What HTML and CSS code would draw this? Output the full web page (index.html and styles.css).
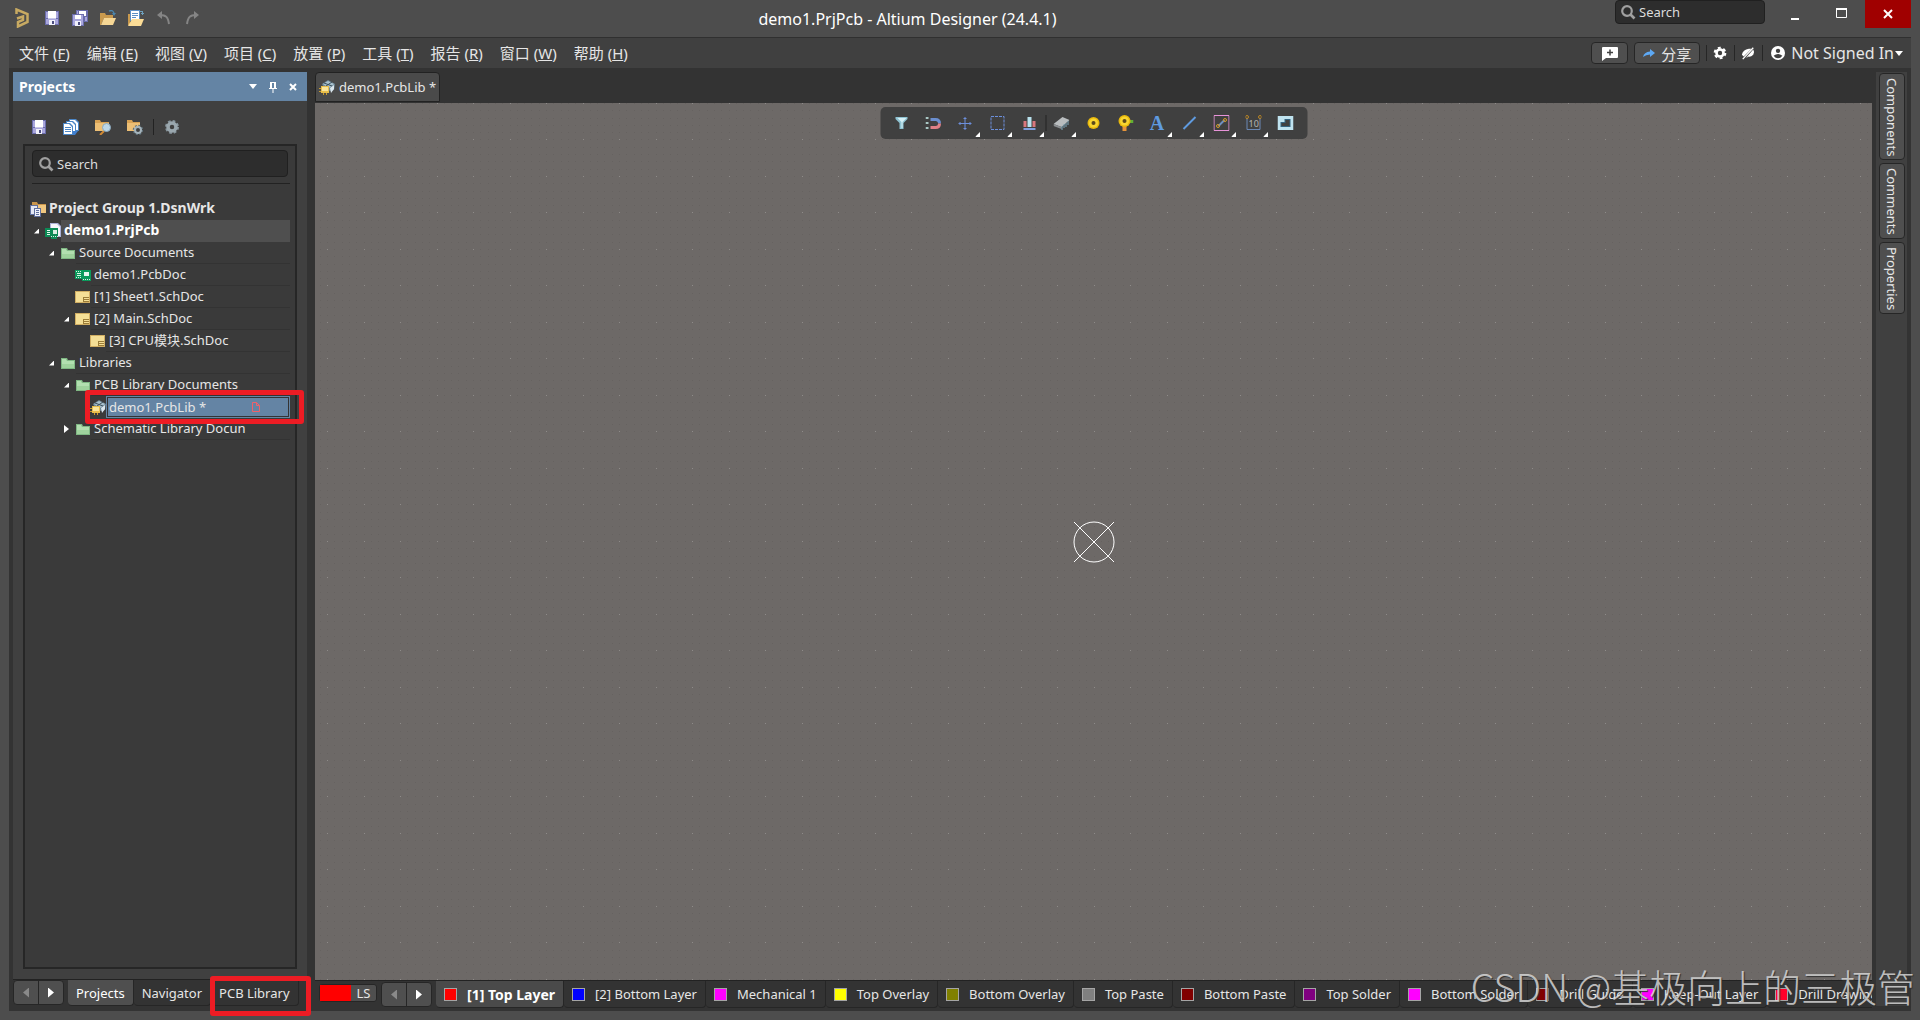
FILE: index.html
```
<!DOCTYPE html>
<html lang="zh-CN">
<head>
  <meta charset="UTF-8">
  <title>demo1.PrjPcb - Altium Designer (24.4.1)</title>
  <link rel="stylesheet" href="styles.css">
</head>
<body>

  <svg class="defs" aria-hidden="true">
    <symbol id="save" viewBox="0 0 16 16">
      <path fill="#6a6cab" d="M1 1h14v14H1z"/>
      <path fill="#a9a6dc" d="M2 2h2v6H2zM12 2h2v6h-2zM2 9h12v5H2z"/>
      <path fill="#fff" d="M4 1h8v7H4z"/>
      <path fill="#c9c8e8" d="M4 8h8v1H4z"/>
      <path fill="#f0f0fa" d="M5 10h6v5H5z"/>
      <path fill="#4b4d80" d="M8 11h2v3H8z"/>
    </symbol>
    <symbol id="save-all" viewBox="0 0 16 16">
      <path fill="#6a6cab" d="M4 0h12v12H4z"/>
      <path fill="#fff" d="M7 1h7v5H7z"/>
      <path fill="#a9a6dc" d="M5 1h1v10H5zM13 7h2v4h-2z"/>
      <path fill="#6a6cab" d="M0 4h12v12H0z"/>
      <path fill="#a9a6dc" d="M1 5h10v10H1z"/>
      <path fill="#fff" d="M3 5h6v4H3z"/>
      <path fill="#f0f0fa" d="M3 11h6v5H3z"/>
      <path fill="#4b4d80" d="M6 12h2v3H6z"/>
    </symbol>
    <symbol id="open" viewBox="0 0 16 16">
      <path fill="#c99a4e" d="M0 3h5l1 2h7v3H4L1 15H0z"/>
      <path fill="#f6d795" d="M4 8h12l-3 7H1z"/>
      <path fill="none" stroke="#4a86ad" stroke-width="1.4" d="M9 1c3-1 5 0 5 3"/>
      <path fill="#4a86ad" d="M12 3h4l-2 3z"/>
    </symbol>
    <symbol id="open-doc" viewBox="0 0 16 16">
      <path fill="#c99a4e" d="M0 4h2v11H0z"/>
      <path fill="#5c8fc4" d="M2 0h10v11H2z"/>
      <path fill="#fff" d="M3 1h8v9H3z"/>
      <path stroke="#5c8fc4" d="M4 3.500h6M4 5.500h6M4 7.500h4"/>
      <path fill="#fbdc96" d="M4 9h12l-3 7H0z"/>
      <path stroke="#6da0bd" d="M12 1.500h3M14.500 1v4M13 3.500h3"/>
    </symbol>
    <symbol id="undo" viewBox="0 0 16 16">
      <path fill="none" stroke="#858585" stroke-width="2" d="M4 5c6 0 8 2 9 9"/>
      <path fill="#858585" d="M1 5l5-4v8z"/>
    </symbol>
    <symbol id="redo" viewBox="0 0 16 16">
      <path fill="none" stroke="#858585" stroke-width="2" d="M12 5C6 5 4 7 3 14"/>
      <path fill="#858585" d="M15 5l-5-4v8z"/>
    </symbol>
    <symbol id="docs" viewBox="0 0 16 16">
      <path fill="#4c86c6" d="M6 0h7l3 3v9H6z"/>
      <path fill="#fff" d="M7 1h5l3 3v7H7z"/>
      <path fill="#4c86c6" d="M3 2h7l3 3v9H3z"/>
      <path fill="#fff" d="M4 3h5l3 3v7H4z"/>
      <path fill="#4c86c6" d="M0 4h7l3 3v9H0z"/>
      <path fill="#fff" d="M1 5h5l3 3v7H1z"/>
      <path stroke="#4c86c6" d="M2 8.500h6M2 10.500h6M2 12.500h6"/>
      <path fill="#3f7fd0" d="M10 12h5l-3 4h-2z"/>
    </symbol>
    <symbol id="folder-search" viewBox="0 0 16 16">
      <path fill="#d8a254" d="M0 1h5l1 2h8v9H0z"/>
      <path fill="#edbf75" d="M0 4h14v8H0z"/>
      <path stroke="#d08a35" stroke-width="2" d="M9 12l-4 4"/>
      <circle cx="11.500" cy="8.500" r="4" fill="#bcd6e6" stroke="#8aa9be"/>
    </symbol>
    <symbol id="folder-gear" viewBox="0 0 16 16">
      <path fill="#d8a254" d="M0 1h5l1 2h7v9H0z"/>
      <path fill="#edbf75" d="M0 4h13v8H0z"/>
      <circle cx="11" cy="11" r="4.500" fill="none" stroke="#5f7079" stroke-width="1.500" stroke-dasharray="2 1.500"/>
      <circle cx="11" cy="11" r="3" fill="#404040" stroke="#a5b4bc" stroke-width="2"/>
    </symbol>
    <symbol id="gear" viewBox="0 0 16 16">
      <circle cx="8" cy="8" r="6" fill="none" stroke="#87959d" stroke-width="2" stroke-dasharray="2.700 2"/>
      <circle cx="8" cy="8" r="4" fill="none" stroke="#9aa7ae" stroke-width="3.500"/>
    </symbol>
    <symbol id="gear-white" viewBox="0 0 16 16">
      <circle cx="8" cy="8" r="6" fill="none" stroke="#fff" stroke-width="2.500" stroke-dasharray="3.280 3"/>
      <circle cx="8" cy="8" r="4" fill="none" stroke="#fff" stroke-width="3"/>
    </symbol>
    <symbol id="search" viewBox="0 0 16 16">
      <circle cx="7" cy="7" r="4.800" fill="none" stroke="#a0a0a0" stroke-width="2.200"/>
      <path stroke="#a0a0a0" stroke-width="2.600" d="M10.500 10.500l4 4"/>
    </symbol>
    <symbol id="group" viewBox="0 0 16 16">
      <path fill="#c9954c" d="M2 1h5l1 2h8v9H2z"/>
      <path fill="#f0c780" d="M3 4h13v8H3z"/>
      <path fill="#5f6f9e" d="M0 4h8v10H0z"/>
      <path fill="#e4e8f4" d="M1 5h6v8H1z"/>
      <path fill="#5f6f9e" d="M4 7h7v9H4z"/>
      <path fill="#eef1fa" d="M5 8h5v7H5z"/>
      <path stroke="#5f6f9e" d="M6 9.500h3M6 11.500h3M6 13.500h3"/>
    </symbol>
    <symbol id="project" viewBox="0 0 16 16">
      <path fill="#aab0d6" d="M5 0h8l3 3v11H5z"/>
      <path fill="#f5f5fb" d="M6 1h6l3 3v9H6z"/>
      <path fill="#0c8a55" d="M0 5h13v9H0z"/>
      <path fill="#0c8a55" d="M6 13h6v3H6z"/>
      <path stroke="#e8f6ef" d="M2 7.500h3M2 9.500h3M2 11.500h3"/>
      <path fill="#d8efe3" d="M8 7h4v4H8z"/>
      <path stroke="#d8efe3" stroke-dasharray="1 1" d="M6 13.500h7"/>
    </symbol>
    <symbol id="folder" viewBox="0 0 16 16">
      <path fill="#7fb783" d="M1 3h6l1 2h7v9H1z"/>
      <path fill="#b2dfb0" d="M2 4h4l1 2h7v7H2z"/>
      <path fill="#9fd29d" d="M2 9h12v4H2z"/>
    </symbol>
    <symbol id="pcb" viewBox="0 0 16 16">
      <path fill="#0c9a5c" d="M0 3h16v9H0zM7 12h9v2H7z"/>
      <path stroke="#d9f3e5" stroke-dasharray="1 1" d="M1 4.500h5M1 10.500h5M8 12.500h8"/>
      <path stroke="#d9f3e5" d="M2 6.500h4M2 8.500h4"/>
      <path fill="#e8f6ef" d="M9 5h5v4H9z"/>
    </symbol>
    <symbol id="sheet" viewBox="0 0 16 16">
      <path fill="#d1ae63" d="M0 2h15v12H0z"/>
      <path fill="#f5df96" d="M1 3h13v10H1z"/>
      <path stroke="#9c7d38" d="M8 8.500h6M9 10.500h5M8.500 9v4M9 12.500h5"/>
    </symbol>
    <symbol id="pcblib" viewBox="0 0 16 16">
      <path fill="#6e8796" d="M3 5l6-4 7 4-1 6-4 1-6-3z"/>
      <path fill="#a9c1cd" d="M4 5l5-3 6 3-5 4z"/>
      <path stroke="#3b4f5c" d="M5 4l8 3M7 7l6-4"/>
      <path fill="#dbe7ee" d="M11 9l4-3v4l-3 4z"/>
      <path fill="#e8be4b" d="M2 7h8v7H2z"/>
      <path fill="#fbe69b" d="M3 8h6v4H3z"/>
      <path stroke="#c99c2c" d="M0 9.500h2M0 12.500h2M4.500 14v2M7.500 14v2"/>
    </symbol>
    <symbol id="pin" viewBox="0 0 12 12">
      <path fill="#fff" d="M3 1h6v6h1v1H6.500v4h-1V8H2V7h1z"/>
      <path fill="#6484a4" d="M5 2h2v5H5z"/>
    </symbol>
    <symbol id="cross" viewBox="0 0 12 12">
      <path stroke="#fff" stroke-width="2" d="M3 3l6 6M9 3l-6 6"/>
    </symbol>
  </svg>

  <div class="app">

    <header class="title-bar">
      <svg class="logo" viewBox="0 0 14 20" aria-hidden="true">
        <path fill="none" stroke="#c8aa62" stroke-width="2.500" d="M1.500 6V1.500L12.500 6v8L3 18.500V14l5-2V8.500L2 10.500"/>
      </svg>
      <div class="quick">
        <button aria-label="Save"><svg><use href="#save"/></svg></button>
        <button aria-label="Save all"><svg><use href="#save-all"/></svg></button>
        <button aria-label="Open"><svg><use href="#open"/></svg></button>
        <button aria-label="Open document"><svg><use href="#open-doc"/></svg></button>
        <button aria-label="Undo"><svg><use href="#undo"/></svg></button>
        <button aria-label="Redo"><svg><use href="#redo"/></svg></button>
      </div>
      <h1>demo1.PrjPcb - Altium Designer (24.4.1)</h1>
      <label class="search top-search">
        <svg><use href="#search"/></svg>
        <input type="text" placeholder="Search" aria-label="Search">
      </label>
      <div class="window-buttons">
        <button aria-label="Minimize"><svg viewBox="0 0 16 16"><path fill="#fff" d="M3 12h8v2H3z"/></svg></button>
        <button aria-label="Maximize"><svg viewBox="0 0 16 16"><path fill="none" stroke="#fff" d="M2.500 2.500h10v9h-10z"/><path fill="#fff" d="M2 2h11v2H2z"/></svg></button>
        <button class="close" aria-label="Close"><svg viewBox="0 0 16 16"><path stroke="#fff" stroke-width="2" d="M4 4l8 8M12 4l-8 8"/></svg></button>
      </div>
    </header>

    <nav class="menu-bar">
      <a href="#">文件 (<u>F</u>)</a>
      <a href="#">编辑 (<u>E</u>)</a>
      <a href="#">视图 (<u>V</u>)</a>
      <a href="#">项目 (<u>C</u>)</a>
      <a href="#">放置 (<u>P</u>)</a>
      <a href="#">工具 (<u>T</u>)</a>
      <a href="#">报告 (<u>R</u>)</a>
      <a href="#">窗口 (<u>W</u>)</a>
      <a href="#">帮助 (<u>H</u>)</a>
      <div class="account">
        <button class="boxed" aria-label="Add comment"><svg viewBox="0 0 16 16"><path fill="#fff" d="M1 2h14q1 0 1 1v9q0 1-1 1H4l-4 3V3q0-1 1-1z"/><path stroke="#404040" stroke-width="1.500" d="M8 4.500v6M5 7.500h6"/></svg></button>
        <button class="boxed share"><svg viewBox="0 0 12 12"><path fill="#5da9f5" d="M7 2l5 4-5 4V7.500Q3 7.500 0 10q1-5 7-5.500z"/></svg>分享</button>
        <button class="plain" aria-label="Settings"><svg><use href="#gear-white"/></svg></button>
        <button class="plain" aria-label="Notifications off"><svg viewBox="0 0 16 16"><path fill="#fff" d="M1 10q1-6 8-7l3 0-9 9zM6 13l8-9q2 3 0 6-3 3-6 2l-1 1z"/><path stroke="#fff" stroke-width="1.500" d="M2 15L14 2"/></svg></button>
        <button class="plain user"><svg viewBox="0 0 16 16"><circle cx="8" cy="8" r="8" fill="#fff"/><circle cx="8" cy="5.500" r="2.500" fill="#404040"/><path fill="#404040" d="M3 11q5-4 10 0-2 3-5 3t-5-3z"/></svg>Not Signed In<i class="caret"></i></button>
      </div>
    </nav>

    <main class="workspace">

      <aside class="side">
        <section class="panel">
          <header class="panel-header">
            <h2>Projects</h2>
            <button aria-label="Panel menu"><i class="caret"></i></button>
            <button aria-label="Pin"><svg><use href="#pin"/></svg></button>
            <button aria-label="Close panel"><svg><use href="#cross"/></svg></button>
          </header>
          <div class="panel-tools">
            <button aria-label="Save"><svg><use href="#save"/></svg></button>
            <button aria-label="Documents"><svg><use href="#docs"/></svg></button>
            <button aria-label="Explore"><svg><use href="#folder-search"/></svg></button>
            <button aria-label="Project options"><svg><use href="#folder-gear"/></svg></button>
            <button class="split" aria-label="Settings"><svg><use href="#gear"/></svg></button>
          </div>
          <div class="tree-box">
            <label class="search">
              <svg><use href="#search"/></svg>
              <input type="text" placeholder="Search" aria-label="Search projects">
            </label>
            <ul class="tree">
              <li class="l0 bold"><svg><use href="#group"/></svg><span>Project Group 1.DsnWrk</span></li>
              <li class="l1 bold open current"><svg><use href="#project"/></svg><span>demo1.PrjPcb</span></li>
              <li class="l2 open"><svg><use href="#folder"/></svg><span>Source Documents</span></li>
              <li class="l3"><svg><use href="#pcb"/></svg><span>demo1.PcbDoc</span></li>
              <li class="l3"><svg><use href="#sheet"/></svg><span>[1] Sheet1.SchDoc</span></li>
              <li class="l3 open"><svg><use href="#sheet"/></svg><span>[2] Main.SchDoc</span></li>
              <li class="l4"><svg><use href="#sheet"/></svg><span>[3] CPU模块.SchDoc</span></li>
              <li class="l2 open"><svg><use href="#folder"/></svg><span>Libraries</span></li>
              <li class="l3 open"><svg><use href="#folder"/></svg><span>PCB Library Documents</span></li>
              <li class="l4 selected"><svg><use href="#pcblib"/></svg><span>demo1.PcbLib *<svg class="modified" viewBox="0 0 10 12"><path fill="none" stroke="#f0616a" d="M1.500 1.500h4l3 3v6h-7zM5.500 1.500v3h3"/></svg></span><i class="mark"></i></li>
              <li class="l3 closed"><svg><use href="#folder"/></svg><span>Schematic Library Docun</span></li>
            </ul>
          </div>
        </section>
        <div class="panel-tabs">
          <div class="arrows">
            <button disabled aria-label="Previous"></button>
            <button aria-label="Next"></button>
          </div>
          <button class="tab active">Projects</button>
          <button class="tab">Navigator</button>
          <button class="tab">PCB Library<i class="mark"></i></button>
        </div>
      </aside>

      <section class="editor">
        <div class="doc-tabs">
          <button class="doc-tab"><svg><use href="#pcblib"/></svg>demo1.PcbLib *</button>
        </div>

        <div class="canvas">
          <svg class="grid" aria-hidden="true">
            <defs>
              <path id="minor" stroke="#666260" d="M0 .500h1M7 .500h1M15 .500h1M22 .500h1M29 .500h1M37 .500h1M44 .500h1M51 .500h1M58 .500h1M66 .500h1"/>
              <path id="major" stroke="#8e8b89" d="M0 .500h1M37 .500h1"/>
              <pattern id="dots" x="12" y="0" width="73" height="73" patternUnits="userSpaceOnUse">
                <use href="#minor"/>
                <use href="#minor" y="7"/>
                <use href="#minor" y="15"/>
                <use href="#minor" y="22"/>
                <use href="#minor" y="29"/>
                <use href="#minor" y="36"/>
                <use href="#minor" y="44"/>
                <use href="#minor" y="51"/>
                <use href="#minor" y="58"/>
                <use href="#minor" y="66"/>
                <use href="#major"/>
                <use href="#major" y="36"/>
              </pattern>
            </defs>
            <rect width="100%" height="100%" fill="url(#dots)"/>
          </svg>

          <div class="tools">
            <button aria-label="Filter"><svg viewBox="0 0 16 16"><path fill="#8fc3d2" d="M2 2h12v2l-4 4v6H6V8L2 4z"/><path fill="#d6f0f6" d="M4 3h9L9 7v6H8V7z"/></svg></button>
            <button aria-label="Snap"><svg viewBox="0 0 16 16"><path fill="none" stroke="#6b8fd0" stroke-width="3" d="M5 4.500h5q4 0 4 4"/><path fill="none" stroke="#df8087" stroke-width="3" d="M14 8.500q0 4-4 4H5"/><path fill="#a9c7c4" d="M0 2h3v2H0zM0 7h3v2H0zM0 12h3v2H0z"/></svg></button>
            <button class="more" aria-label="Move"><svg viewBox="0 0 16 16"><path stroke="#6c8fdc" d="M7.500 2v13M1 8.500h13"/><path fill="#6c8fdc" d="M6 3h3v1H6zM6 13h3v1H6zM2 7h1v3H2zM12 7h1v3h-1z"/></svg></button>
            <button class="more" aria-label="Select area"><svg viewBox="0 0 16 16"><path fill="none" stroke="#6c8fdc" stroke-dasharray="3 1" d="M1.500 1.500h13v13h-13z"/></svg></button>
            <button class="more" aria-label="Align"><svg viewBox="0 0 16 16"><path fill="#d9777d" d="M2 6h3v6H2zM11 6h3v6h-3z"/><path fill="#b9e2ee" d="M6 2h4v10H6z"/><path fill="#7f9fe0" d="M2 13h12v2H2z"/></svg></button>
            <button class="more split" aria-label="Component"><svg viewBox="0 0 16 16"><path fill="#b9bdbf" d="M0 9l9-7 7 3-8 7z"/><path fill="#8b8f92" d="M0 9l8 3v2l-8-3z"/><path stroke="#7fa9bd" d="M8.500 11v4M10.500 9v4M12.500 8v4M14.500 6v4"/></svg></button>
            <button aria-label="Pad"><svg viewBox="0 0 16 16"><circle cx="8" cy="8" r="6" fill="#e9b90c"/><circle cx="8" cy="8" r="4.500" fill="#f9d631"/><circle cx="8" cy="8" r="2" fill="#5b4a1c"/></svg></button>
            <button aria-label="Via"><svg viewBox="0 0 16 16"><path fill="#e8953a" d="M5 9h4v7H5z"/><path fill="#61ae35" d="M10 5h6v3h-6z"/><circle cx="7" cy="6" r="6" fill="#e9b90c"/><circle cx="7" cy="6" r="4.500" fill="#f9d631"/><circle cx="7" cy="6" r="2" fill="#5b4a1c"/></svg></button>
            <button class="more letter" aria-label="String">A</button>
            <button class="more" aria-label="Line"><svg viewBox="0 0 16 16"><path stroke="#5f9be0" stroke-width="2" d="M2 14L14 2"/></svg></button>
            <button class="more" aria-label="Room"><svg viewBox="0 0 16 16"><path fill="none" stroke="#e793d8" d="M.500 .500h15v15H.500z"/><path stroke="#6f8fc0" stroke-width="2" d="M5 11l6-6"/><circle cx="4.500" cy="11" r="1.500" fill="none" stroke="#d69a25"/><circle cx="11.500" cy="5" r="1.500" fill="none" stroke="#d69a25"/></svg></button>
            <button class="more" aria-label="Dimension"><svg viewBox="0 0 16 16"><path fill="none" stroke="#6b88b5" d="M1.500 3v11.500h13V3"/><circle cx="1.500" cy="2" r="1.500" fill="none" stroke="#b98726"/><circle cx="14.500" cy="2" r="1.500" fill="none" stroke="#b98726"/><text x="3" y="12" font-size="9" fill="#b5b5b5">10</text></svg></button>
            <button aria-label="Region"><svg viewBox="0 0 16 16"><path fill="#bfe3f0" d="M0 1h16v14H0z"/><path fill="#356481" d="M3 7h4V4h6v8H3z"/><path fill="#404040" d="M4 8h4V5h4v6H4z"/></svg></button>
          </div>

          <svg class="origin" viewBox="0 0 42 42" aria-hidden="true">
            <g fill="none" stroke="#fff">
              <circle cx="21" cy="21" r="20"/>
              <path d="M1 1l40 40M41 1L1 41"/>
            </g>
          </svg>
        </div>

        <div class="layers">
          <button class="layer-set"><i class="c-red"></i><span>LS</span></button>
          <div class="arrows">
            <button disabled aria-label="Previous layer"></button>
            <button aria-label="Next layer"></button>
          </div>
          <button class="layer active"><i class="c-red"></i>[1] Top Layer</button>
          <button class="layer"><i class="c-blue"></i>[2] Bottom Layer</button>
          <button class="layer"><i class="c-magenta"></i>Mechanical 1</button>
          <button class="layer"><i class="c-yellow"></i>Top Overlay</button>
          <button class="layer"><i class="c-olive"></i>Bottom Overlay</button>
          <button class="layer"><i class="c-gray"></i>Top Paste</button>
          <button class="layer"><i class="c-maroon"></i>Bottom Paste</button>
          <button class="layer"><i class="c-purple"></i>Top Solder</button>
          <button class="layer"><i class="c-magenta"></i>Bottom Solder</button>
          <button class="layer"><i class="c-maroon"></i>Drill Guide</button>
          <button class="layer"><i class="c-magenta"></i>Keep-Out Layer</button>
          <button class="layer"><i class="c-crimson"></i>Drill Drawing</button>
        </div>
      </section>

      <aside class="dock">
        <button>Components</button>
        <button>Comments</button>
        <button>Properties</button>
      </aside>

    </main>
  </div>

  <div class="watermark">CSDN @基极向上的三极管</div>

</body>
</html>
```
FILE: styles.css
```
* {
  box-sizing: border-box;
}

body {
  margin: 0;
  background-color: #4d4d4d;
  color: #e6e6e6;
  font-family: "Noto Sans", "Noto Sans CJK SC", sans-serif;
  font-size: 13px;
  overflow: hidden;
}

button {
  margin: 0;
  padding: 0;
  border: none;
  background: none;
  color: inherit;
  font: inherit;
  white-space: nowrap;
  cursor: pointer;
}

svg {
  width: 16px;
  height: 16px;
  flex: none;
  display: block;
}

.defs {
  position: absolute;
  width: 0;
  height: 0;
}

.app {
  display: flex;
  flex-direction: column;
  height: 100vh;
  padding: 0 9px 9px;
}

.caret {
  border: 4px solid transparent;
  border-top: 5px solid #fff;
  border-bottom: none;
}

.mark {
  position: absolute;
  border: 5px solid #ed1c24;
  border-radius: 3px;
  pointer-events: none;
  z-index: 2;
}

/* title bar */

.title-bar {
  display: flex;
  align-items: flex-start;
  height: 37px;
}

.logo {
  width: 14px;
  height: 20px;
  margin: 8px 15px 0 6px;
}

.quick {
  display: flex;
  gap: 12px;
  padding-top: 10px;
}

.title-bar h1 {
  flex: 1;
  margin: 7px 0 0;
  color: #fff;
  font-size: 16px;
  line-height: 24px;
  font-weight: normal;
  text-align: center;
}

.search {
  display: flex;
  align-items: center;
  gap: 3px;
  padding: 0 6px;
  background-color: #2d2d2d;
  border: 1px solid #202020;
  border-radius: 4px;
}

.search input {
  flex: 1;
  min-width: 0;
  padding: 0;
  border: none;
  outline: none;
  background: none;
  color: inherit;
  font: inherit;
}

.search input::placeholder {
  color: #dcdcdc;
  opacity: 1;
}

.top-search {
  width: 150px;
  height: 24px;
  padding: 0 4px;
}

.window-buttons {
  display: flex;
  padding-left: 8px;
}

.window-buttons button {
  display: flex;
  align-items: center;
  justify-content: center;
  width: 46px;
  height: 28px;
}

.window-buttons .close {
  background-color: #a00000;
}

/* menu bar */

.menu-bar {
  display: flex;
  align-items: center;
  gap: 17px;
  height: 31px;
  padding: 0 8px 0 10px;
  background-color: #404040;
  border-top: 1px solid #303030;
  font-size: 15px;
}

.menu-bar a {
  padding-bottom: 1px;
  color: inherit;
  text-decoration: none;
}

.account {
  display: flex;
  align-items: center;
  margin-left: auto;
}

.account button {
  display: flex;
  align-items: center;
  justify-content: center;
  gap: 6px;
  height: 16px;
}

.account .boxed {
  width: 37px;
  height: 22px;
  margin-right: 6px;
  background-color: #4f4f4f;
  border: 1px solid #262626;
  border-radius: 4px;
}

.account .share {
  width: 66px;
}

.account .share svg {
  width: 12px;
  height: 12px;
}

.account .plain {
  padding: 0 7px 0 6px;
  border-left: 1px solid #262626;
}

.account .plain svg {
  width: 14px;
  height: 14px;
}

.account .user {
  gap: 6px;
  padding: 0 0 0 8px;
  font-size: 16px;
}

.account .user .caret {
  margin-left: -5px;
}

/* workspace */

.workspace {
  flex: 1;
  min-height: 0;
  display: flex;
  padding: 4px 4px 0;
  background-color: #333;
}

.side {
  display: flex;
  flex-direction: column;
  flex: none;
  width: 294px;
  margin-right: 8px;
}

.panel {
  flex: 1;
  min-height: 0;
  display: flex;
  flex-direction: column;
  background-color: #404040;
}

.panel-header {
  display: flex;
  align-items: center;
  gap: 8px;
  height: 29px;
  padding: 0 8px 0 6px;
  background-color: #6484a4;
}

.panel-header h2 {
  flex: 1;
  margin: 0;
  color: #fff;
  font-size: 14px;
}

.panel-header button {
  display: flex;
  justify-content: center;
  width: 12px;
}

.panel-header svg {
  width: 12px;
  height: 12px;
}

.panel-tools {
  display: flex;
  align-items: center;
  gap: 16px;
  padding: 18px 18px 9px;
}

.panel-tools .split {
  margin-left: -6px;
  padding-left: 10px;
  border-left: 1px solid #222;
}

.tree-box {
  flex: 1;
  min-height: 0;
  margin: 0 10px 10px;
  padding: 4px 5px 0 7px;
  background-color: #3a3a3a;
  border: 2px solid #262626;
}

.tree-box .search {
  height: 27px;
  margin-right: 2px;
  padding: 0 5px;
}

.tree {
  margin: 6px 0 0;
  padding: 14px 0 0;
  border-top: 1px solid #222;
  list-style: none;
}

.tree li {
  position: relative;
  display: flex;
  align-items: center;
  height: 22px;
  white-space: nowrap;
}

.tree li > span {
  flex: 1;
  align-self: stretch;
  padding-left: 3px;
  line-height: 20px;
  border-bottom: 1px solid #333;
}

.tree .bold {
  font-size: 14px;
  font-weight: bold;
}

.tree .bold > span {
  border-color: transparent;
}

.tree .l0 { margin-left: -2px; }
.tree .l1 { padding-left: 13px; }
.tree .l2 { padding-left: 28px; }
.tree .l3 { padding-left: 43px; }
.tree .l4 { padding-left: 58px; }

.tree .open::before,
.tree .closed::before {
  content: "";
  width: 5px;
  height: 5px;
  margin-left: -11px;
  margin-right: 6px;
  background-color: #fff;
  clip-path: polygon(100% 0, 100% 100%, 0 100%);
}

.tree .closed::before {
  height: 8px;
  clip-path: polygon(0 0, 100% 50%, 0 100%);
}

.tree .current > span {
  background-color: #4f4f4f;
  color: #fff;
}

.tree .selected > span {
  display: flex;
  align-items: center;
  justify-content: space-between;
  padding: 0 28px 1px 2px;
  line-height: 18px;
  background-color: #6484a4;
  border: 1px solid #6484a4;
  box-shadow: inset 0 0 0 1px #333;
}

.tree .modified {
  width: 10px;
  height: 12px;
}

.tree .mark {
  top: -6px;
  bottom: -6px;
  left: 53px;
  right: -14px;
}

/* bottom tabs */

.arrows {
  display: flex;
  flex: none;
  width: 51px;
  height: 25px;
  margin-right: 4px;
  background-color: #4f4f4f;
  border: 1px solid #262626;
  border-radius: 4px;
}

.arrows button {
  flex: 1;
}

.arrows button + button {
  border-left: 1px solid #262626;
}

.arrows button::before {
  content: "";
  display: block;
  width: 6px;
  height: 10px;
  margin: 0 auto;
  background-color: #fff;
  clip-path: polygon(0 0, 100% 50%, 0 100%);
}

.arrows button:disabled::before {
  background-color: #8a8a8a;
  clip-path: polygon(100% 0, 0 50%, 100% 100%);
}

.panel-tabs {
  display: flex;
  height: 32px;
  border-top: 1px solid #222;
}

.tab {
  position: relative;
  height: 26px;
  padding: 0 8px;
  border: 1px solid #262626;
  border-top: none;
  border-left: none;
  border-radius: 0 0 4px 4px;
}

.tab.active {
  background-color: #4f4f4f;
  color: #fff;
}

.tab .mark {
  top: -4px;
  right: -13px;
  left: -1px;
  height: 40px;
}

/* editor */

.editor {
  flex: 1;
  min-width: 0;
  display: flex;
  flex-direction: column;
}

.doc-tabs {
  display: flex;
  height: 31px;
}

.doc-tab {
  display: flex;
  align-items: center;
  gap: 4px;
  height: 30px;
  padding: 0 3px;
  background-color: #4a4a4a;
  border: 1px solid #222;
  border-radius: 4px 4px 0 0;
}

.canvas {
  position: relative;
  flex: 1;
  min-height: 0;
  background-color: #6d6967;
  overflow: hidden;
}

.grid {
  width: 100%;
  height: 100%;
}

.tools {
  position: absolute;
  top: 4px;
  left: 50%;
  transform: translateX(-50%);
  display: flex;
  padding: 0 6px 0 5px;
  background-color: #404040;
  border-radius: 5px;
}

.tools button {
  position: relative;
  display: flex;
  align-items: center;
  justify-content: center;
  width: 32px;
  height: 32px;
}

.tools .more::after {
  content: "";
  position: absolute;
  right: 1px;
  bottom: 2px;
  width: 5px;
  height: 5px;
  background-color: #fff;
  clip-path: polygon(100% 0, 100% 100%, 0 100%);
}

.tools .split::before {
  content: "";
  position: absolute;
  left: 0;
  top: 8px;
  width: 1px;
  height: 16px;
  background-color: #222;
}

.tools .letter {
  color: #5f9be0;
  font-family: "Liberation Serif", serif;
  font-size: 20px;
  font-weight: bold;
}

.origin {
  position: absolute;
  top: 50%;
  left: 50%;
  width: 42px;
  height: 42px;
  transform: translate(-50%, -50%);
}

/* layer bar */

.layers {
  display: flex;
  align-items: flex-start;
  height: 31px;
  padding-left: 4px;
  border-top: 1px solid #222;
  overflow: hidden;
}

.layers .arrows {
  margin-top: 1px;
}

.layer-set {
  display: flex;
  flex: none;
  height: 18px;
  margin: 3px 4px 0 0;
  background-color: #4f4f4f;
  border: 1px solid #262626;
  border-radius: 3px;
  line-height: 17px;
}

.layer-set i {
  width: 31px;
}

.layer-set span {
  width: 25px;
}

.layer {
  display: flex;
  flex: none;
  align-items: center;
  gap: 10px;
  height: 27px;
  padding: 0 8px;
  border: 1px solid #262626;
  border-top: none;
  border-left: none;
  border-radius: 0 0 4px 4px;
}

.layer.active {
  background-color: #4a4a4a;
  color: #fff;
  font-size: 14px;
  font-weight: bold;
}

.layer i {
  width: 13px;
  height: 13px;
  border: 1px solid #a5a5a5;
}

.c-red { background-color: #f00; }
.c-blue { background-color: #00f; }
.c-magenta { background-color: #f0f; }
.c-yellow { background-color: #ff0; }
.c-olive { background-color: #808000; }
.c-gray { background-color: #808080; }
.c-maroon { background-color: #800000; }
.c-purple { background-color: #800080; }
.c-crimson { background-color: #ff002a; }

/* right dock */

.dock {
  display: flex;
  flex-direction: column;
  flex: none;
  align-items: center;
  gap: 3px;
  width: 31px;
  margin: 0 0 5px 4px;
  padding-top: 1px;
  background-color: #404040;
}

.dock button {
  width: 26px;
  padding: 4px 0 3px;
  background-color: #4f4f4f;
  border: 1px solid #262626;
  border-radius: 4px;
  writing-mode: vertical-rl;
}

.watermark {
  position: absolute;
  right: 5px;
  bottom: 8px;
  color: rgba(225, 225, 225, 0.8);
  font-family: "Noto Sans CJK SC", sans-serif;
  font-size: 38px;
  font-weight: 300;
  line-height: 52px;
  text-shadow: 1px 1px 1px #333;
  white-space: nowrap;
  z-index: 3;
}
```
